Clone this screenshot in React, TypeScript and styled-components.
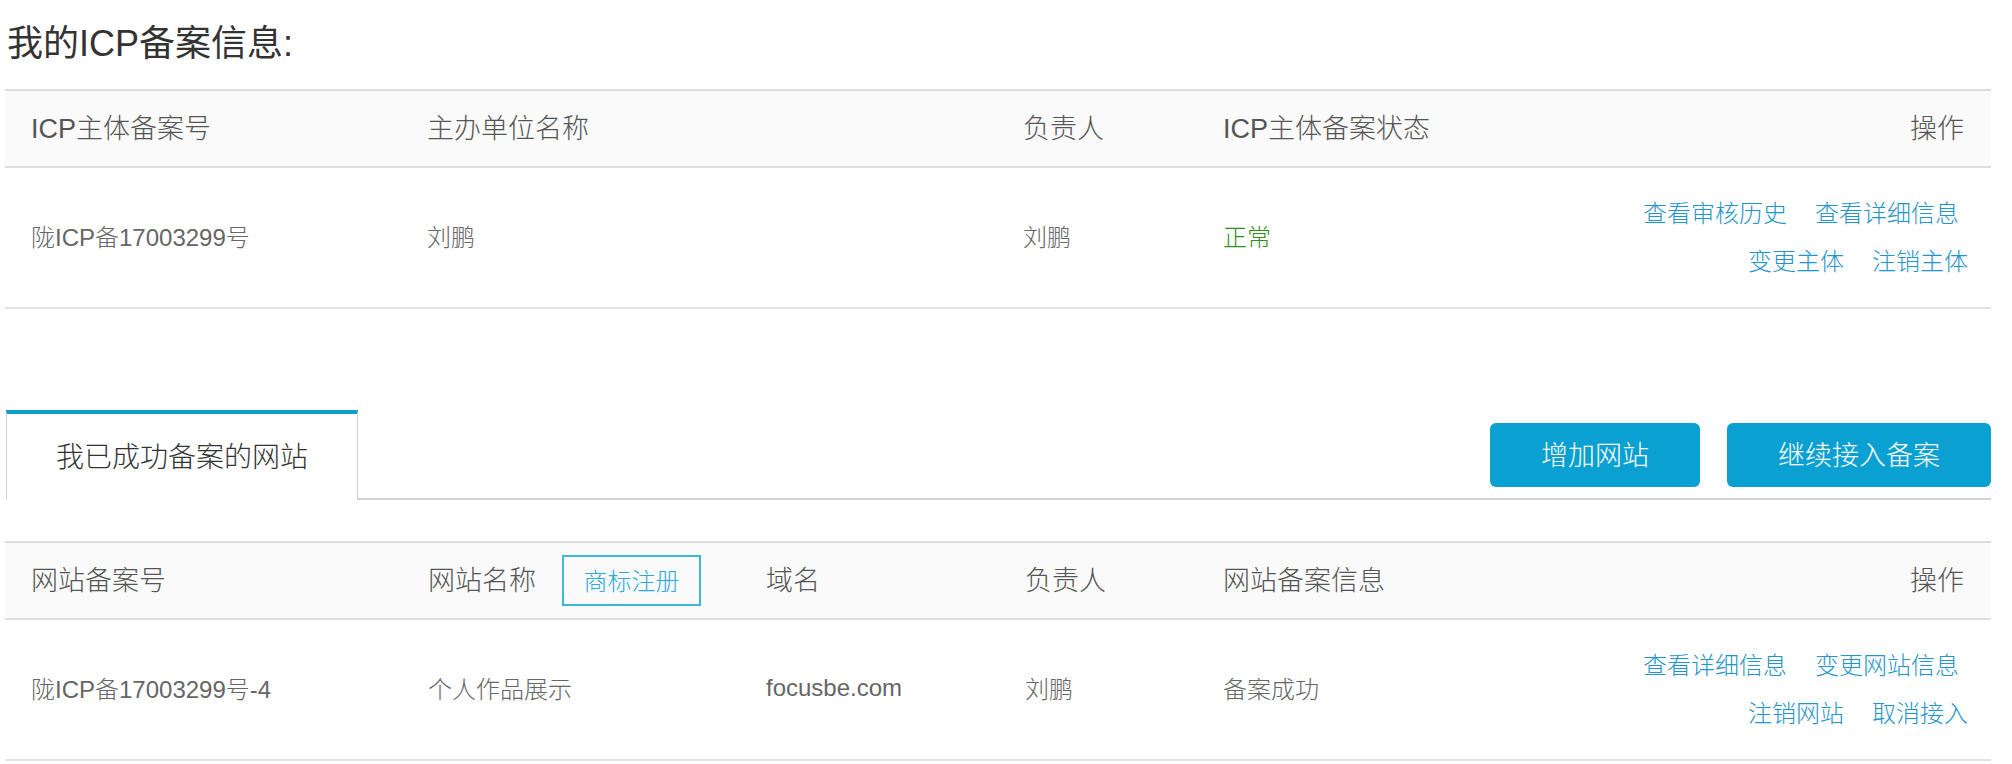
import React from "react";
import styled, { createGlobalStyle } from "styled-components";

const GlobalStyle = createGlobalStyle`
  html, body {
    margin: 0;
    padding: 0;
    background: #fff;
  }
  body {
    font-family: "Liberation Sans", "Noto Sans CJK SC", sans-serif;
    color: #666;
  }
`;

const Page = styled.div`
  box-sizing: border-box;
  width: 2012px;
  padding: 0 21px 0 5px;
`;

const Title = styled.h1`
  margin: 0;
  box-sizing: border-box;
  height: 89px;
  display: flex;
  align-items: center;
  padding: 0 0 9px 2px;
  font-size: 36px;
  font-weight: normal;
  color: #333;
`;

const HeadRow = styled.div<{ $cols: string }>`
  box-sizing: border-box;
  display: grid;
  grid-template-columns: ${(p) => p.$cols};
  height: 79px;
  background: #fafafa;
  border-top: 2px solid #dedede;
  border-bottom: 2px solid #dedede;
  font-size: 27px;
  font-weight: 300;
  color: #555;
`;

const BodyRow = styled.div<{ $cols: string }>`
  box-sizing: border-box;
  display: grid;
  grid-template-columns: ${(p) => p.$cols};
  height: 141px;
  border-bottom: 2px solid #e2e2e2;
  font-size: 24px;
  font-weight: 300;
  color: #666;
`;

const Cell = styled.div<{ $right?: boolean }>`
  display: flex;
  align-items: center;
  justify-content: ${(p) => (p.$right ? "flex-end" : "flex-start")};
  padding: ${(p) => (p.$right ? "0 27px 4px 0" : "0 0 4px 26px")};
  white-space: nowrap;
`;

const Status = styled.span`
  color: #2f8f1a;
`;

const TagButton = styled.span`
  box-sizing: border-box;
  display: inline-flex;
  align-items: center;
  justify-content: center;
  width: 139px;
  height: 51px;
  margin: 4px 0 0 26px;
  padding-bottom: 2px;
  border: 2px solid #3cb6dc;
  font-size: 24px;
  color: #2eaad6;
`;

const Actions = styled.div`
  display: flex;
  flex-direction: column;
  justify-content: center;
  align-items: flex-end;
`;

const ActionLine = styled.div<{ $inset: number }>`
  display: flex;
  gap: 28px;
  line-height: 48px;
  padding-right: ${(p) => p.$inset}px;
`;

const Link = styled.a`
  color: #1f95cb;
  text-decoration: none;
  cursor: pointer;
`;

const TabBar = styled.div`
  display: flex;
  height: 90px;
  margin-top: 101px;
`;

const Tab = styled.div`
  box-sizing: border-box;
  width: 352px;
  height: 90px;
  display: flex;
  align-items: center;
  justify-content: center;
  padding-bottom: 4px;
  margin-left: 1px;
  border-top: 4px solid #0c9fcd;
  border-left: 1px solid #cfcfcf;
  border-right: 1px solid #cfcfcf;
  background: #fff;
  font-size: 28px;
  font-weight: 300;
  color: #333;
`;

const TabRest = styled.div`
  box-sizing: border-box;
  flex: 1;
  display: flex;
  justify-content: flex-end;
  align-items: flex-end;
  gap: 27px;
  padding-bottom: 11px;
  border-bottom: 2px solid #d2d2d2;
`;

const Button = styled.button`
  height: 64px;
  padding: 0 51px 3px;
  border: none;
  border-radius: 6px;
  background: #0ba0d2;
  color: #fff;
  font-family: inherit;
  font-size: 27px;
  font-weight: 300;
  cursor: pointer;
`;

const Table = styled.div<{ $gap?: number }>`
  margin-top: ${(p) => p.$gap ?? 0}px;
`;

const subjectCols = "396px 596px 200px 1fr 420px";
const siteCols = "397px 338px 259px 198px 1fr 420px";

const App: React.FC = () => {
  return (
    <Page>
      <GlobalStyle />
      <Title>我的ICP备案信息:</Title>

      <Table>
        <HeadRow $cols={subjectCols}>
          <Cell>ICP主体备案号</Cell>
          <Cell>主办单位名称</Cell>
          <Cell>负责人</Cell>
          <Cell>ICP主体备案状态</Cell>
          <Cell $right>操作</Cell>
        </HeadRow>
        <BodyRow $cols={subjectCols}>
          <Cell>陇ICP备17003299号</Cell>
          <Cell>刘鹏</Cell>
          <Cell>刘鹏</Cell>
          <Cell>
            <Status>正常</Status>
          </Cell>
          <Actions>
            <ActionLine $inset={32}>
              <Link>查看审核历史</Link>
              <Link>查看详细信息</Link>
            </ActionLine>
            <ActionLine $inset={23}>
              <Link>变更主体</Link>
              <Link>注销主体</Link>
            </ActionLine>
          </Actions>
        </BodyRow>
      </Table>

      <TabBar>
        <Tab>我已成功备案的网站</Tab>
        <TabRest>
          <Button>增加网站</Button>
          <Button>继续接入备案</Button>
        </TabRest>
      </TabBar>

      <Table $gap={41}>
        <HeadRow $cols={siteCols}>
          <Cell>网站备案号</Cell>
          <Cell>
            网站名称
            <TagButton>商标注册</TagButton>
          </Cell>
          <Cell>域名</Cell>
          <Cell>负责人</Cell>
          <Cell>网站备案信息</Cell>
          <Cell $right>操作</Cell>
        </HeadRow>
        <BodyRow $cols={siteCols}>
          <Cell>陇ICP备17003299号-4</Cell>
          <Cell>个人作品展示</Cell>
          <Cell>focusbe.com</Cell>
          <Cell>刘鹏</Cell>
          <Cell>备案成功</Cell>
          <Actions>
            <ActionLine $inset={32}>
              <Link>查看详细信息</Link>
              <Link>变更网站信息</Link>
            </ActionLine>
            <ActionLine $inset={23}>
              <Link>注销网站</Link>
              <Link>取消接入</Link>
            </ActionLine>
          </Actions>
        </BodyRow>
      </Table>
    </Page>
  );
};

export default App;
